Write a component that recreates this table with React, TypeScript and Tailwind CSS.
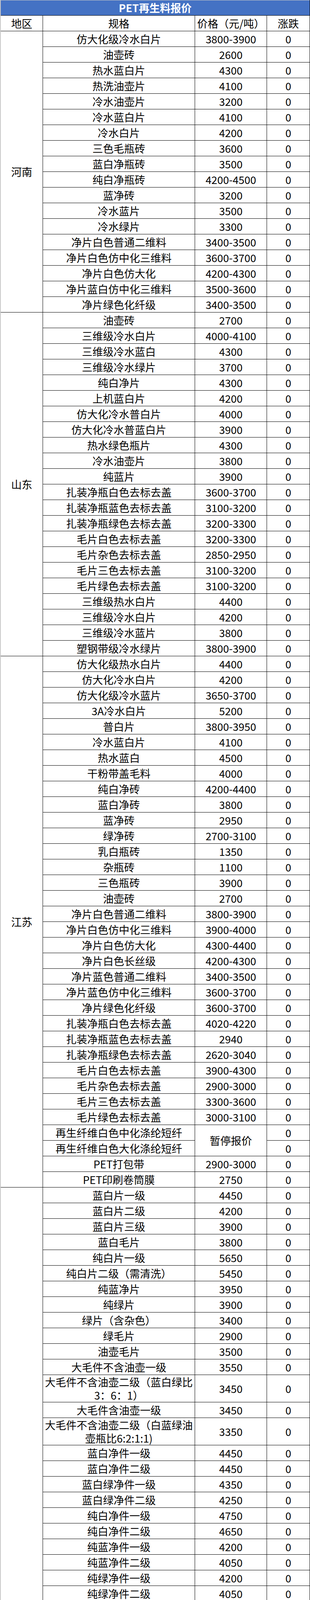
import React from "react";

type Row = { spec: string | string[]; price: string; change?: number };
type Group = { merged: string; rows: { spec: string; change?: number }[] };
type Block = Row | Group;

const r = (spec: string | string[], price: string, change = 0): Row => ({ spec, price, change });

const regions: { name: string; blocks: Block[] }[] = [
  {
    name: "河南",
    blocks: [
      r("仿大化级冷水白片", "3800-3900"),
      r("油壶砖", "2600"),
      r("热水蓝白片", "4300"),
      r("热洗油壶片", "4100"),
      r("冷水油壶片", "3200"),
      r("冷水蓝白片", "4100"),
      r("冷水白片", "4200"),
      r("三色毛瓶砖", "3600"),
      r("蓝白净瓶砖", "3500"),
      r("纯白净瓶砖", "4200-4500"),
      r("蓝净砖", "3200"),
      r("冷水蓝片", "3500"),
      r("冷水绿片", "3300"),
      r("净片白色普通二维料", "3400-3500"),
      r("净片白色仿中化三维料", "3600-3700"),
      r("净片白色仿大化", "4200-4300"),
      r("净片蓝白仿中化三维料", "3500-3600"),
      r("净片绿色化纤级", "3400-3500"),
    ],
  },
  {
    name: "山东",
    blocks: [
      r("油壶砖", "2700"),
      r("三维级冷水白片", "4000-4100"),
      r("三维级冷水蓝白", "4300"),
      r("三维级冷水绿片", "3700"),
      r("纯白净片", "4300"),
      r("上机蓝白片", "4200"),
      r("仿大化冷水普白片", "4000"),
      r("仿大化冷水普蓝白片", "3900"),
      r("热水绿色瓶片", "4300"),
      r("冷水油壶片", "3800"),
      r("纯蓝片", "3900"),
      r("扎装净瓶白色去标去盖", "3600-3700"),
      r("扎装净瓶蓝色去标去盖", "3100-3200"),
      r("扎装净瓶绿色去标去盖", "3200-3300"),
      r("毛片白色去标去盖", "3200-3300"),
      r("毛片杂色去标去盖", "2850-2950"),
      r("毛片三色去标去盖", "3100-3200"),
      r("毛片绿色去标去盖", "3100-3200"),
      r("三维级热水白片", "4400"),
      r("三维级冷水白片", "4200"),
      r("三维级冷水蓝片", "3800"),
      r("塑钢带级冷水绿片", "3800-3900"),
    ],
  },
  {
    name: "江苏",
    blocks: [
      r("仿大化级热水白片", "4400"),
      r("仿大化冷水白片", "4200"),
      r("仿大化级冷水蓝片", "3650-3700"),
      r("3A冷水白片", "5200"),
      r("普白片", "3800-3950"),
      r("冷水蓝白片", "4100"),
      r("热水蓝白", "4500"),
      r("干粉带盖毛料", "4000"),
      r("纯白净砖", "4200-4400"),
      r("蓝白净砖", "3800"),
      r("蓝净砖", "2950"),
      r("绿净砖", "2700-3100"),
      r("乳白瓶砖", "1350"),
      r("杂瓶砖", "1100"),
      r("三色瓶砖", "3900"),
      r("油壶砖", "2700"),
      r("净片白色普通二维料", "3800-3900"),
      r("净片白色仿中化三维料", "3900-4000"),
      r("净片白色仿大化", "4300-4400"),
      r("净片白色长丝级", "4200-4300"),
      r("净片蓝色普通二维料", "3400-3500"),
      r("净片蓝色仿中化三维料", "3600-3700"),
      r("净片绿色化纤级", "3600-3700"),
      r("扎装净瓶白色去标去盖", "4020-4220"),
      r("扎装净瓶蓝色去标去盖", "2940"),
      r("扎装净瓶绿色去标去盖", "2620-3040"),
      r("毛片白色去标去盖", "3900-4300"),
      r("毛片杂色去标去盖", "2900-3000"),
      r("毛片三色去标去盖", "3300-3600"),
      r("毛片绿色去标去盖", "3000-3100"),
      {
        merged: "暂停报价",
        rows: [{ spec: "再生纤维白色中化涤纶短纤" }, { spec: "再生纤维白色大化涤纶短纤" }],
      },
      r("PET打包带", "2900-3000"),
      r("PET印刷卷筒膜", "2750"),
    ],
  },
  {
    name: "浙江",
    blocks: [
      r("蓝白片一级", "4450"),
      r("蓝白片二级", "4200"),
      r("蓝白片三级", "3900"),
      r("蓝白毛片", "3800"),
      r("纯白片一级", "5650"),
      r("纯白片二级（需清洗）", "5450"),
      r("纯蓝净片", "3950"),
      r("纯绿片", "3900"),
      r("绿片（含杂色）", "3400"),
      r("绿毛片", "2900"),
      r("油壶毛片", "3500"),
      r("大毛件不含油壶一级", "3550"),
      r(["大毛件不含油壶二级（蓝白绿比", "3：6：1）"], "3450"),
      r("大毛件含油壶一级", "3450"),
      r(["大毛件不含油壶二级（白蓝绿油", "壶瓶比6:2:1:1)"], "3350"),
      r("蓝白净件一级", "4450"),
      r("蓝白净件二级", "4450"),
      r("蓝白绿净件一级", "4350"),
      r("蓝白绿净件二级", "4250"),
      r("纯白净件一级", "4750"),
      r("纯白净件二级", "4650"),
      r("纯蓝净件一级", "4200"),
      r("纯蓝净件二级", "4050"),
      r("纯绿净件一级", "4200"),
      r("纯绿净件二级", "4050"),
      r("绿净件一级（含杂色）", "3900"),
      r("绿净件二级（含杂色）", "3750"),
      r("油壶净件", "3000"),
      r("油壶毛件", "2850"),
      r("毛瓶", "4000"),
      r("净片白色普通二维料", "3800-3900"),
      r("净片白色仿中化三维料", "3900-4000"),
      r("净片白色仿大化", "4100-4200"),
      r("净片白色长丝级", "4300-4400"),
      r("净片蓝色普通二维料", "3400-3500"),
      r("净片蓝色仿中化三维料", "3600-3700"),
      r("净片绿色化纤级", "3600-3700"),
      r("扎装净瓶白色去标去盖", "3500-3600"),
      r("扎装净瓶蓝色去标去盖", "3300-3400", 100),
      r("扎装净瓶绿色去标去盖", "3000", 200),
      r("毛片白色去标去盖", "3300-3400", 100),
      r("毛片杂色去标去盖", "2900-3000", 100),
      r("毛片三色去标去盖", "3200-3300", 100),
      r("毛片绿色去标去盖", "3000-3100", 100),
      r("二维上机蓝白片", "4500"),
      r("冷水蓝白片", "4000"),
      r("蓝白毛片（带盖）", "3600"),
      r("绿瓶砖", "3000"),
      r("冷水绿片", "3400"),
      r("优质白瓶", "4400"),
      r(["普通白瓶（外表灰暗但水洗后能", "恢复光亮）"], "3600"),
      r(["等外白瓶（含黏胶标签，外表灰", "暗但水洗后不能恢复光亮）"], "2800"),
      r("蓝瓶", "2400"),
      r(["散货优质绿瓶（单独打包，优质", "比例85%以上，加400元/吨）"], "2300"),
      r("普通绿瓶", "2100"),
      r(["小油瓶（油瓶比例不超过", "10%）"], "2500"),
      r(["散货杂色瓶（单独打包，加300", "元/吨）"], "100"),
      r(["散货杂塑瓶（单独打包，加300", "元/吨）"], "100"),
      r(["散货瓶盖（单独装袋，加200元/", "吨）"], "2600"),
      r(["冷水片3A白瓶片（分六级，按", "等级结算）"], "4400-4900"),
      r(["冷水白蓝片（分六级，按等级结", "算）"], "4100-4500"),
      r("单独打包油砖", "2500"),
      r("单独打包瓶胚粉碎料（白）", "6600"),
      r("单独打包瓶胚粉碎料（灰）", "6300"),
      r("塑钢带级冷水绿片", "3500"),
      r("三维级热水蓝白片", "4400"),
      r("长丝级冷水蓝白片", "4100"),
    ],
  },
  {
    name: "福建",
    blocks: [
      r("三维级热水蓝白片", "4100-4200"),
      {
        merged: "暂停报价",
        rows: [
          { spec: "净片白色仿中化三维料" },
          { spec: "净片白色仿大化" },
          { spec: "净片白色长丝级" },
        ],
      },
      r("热水蓝白片", "4300"),
      r("带盖毛料", "3800"),
      r("冷水蓝白", "3800-3900"),
    ],
  },
];

function Change({ value = 0 }: { value?: number }) {
  return <span className={value ? "font-bold text-[#ff0000]" : ""}>{value}</span>;
}

function PriceRow({ row }: { row: Row }) {
  const lines = Array.isArray(row.spec) ? row.spec : [row.spec];
  const tall = lines.length > 1;
  return (
    <div className={`flex border-b border-black ${tall ? "h-[70px]" : "h-[40px]"}`}>
      <div className="flex w-[389px] shrink-0 flex-col items-center justify-center border-r border-black">
        {lines.map((line, i) => (
          <div key={i} className="whitespace-nowrap">
            {line}
          </div>
        ))}
      </div>
      <div className="flex w-[184px] shrink-0 items-center justify-center border-r border-black">
        {row.price}
      </div>
      <div className="flex flex-1 items-center justify-center">
        <Change value={row.change} />
      </div>
    </div>
  );
}

// price cell spans several rows; spec and change columns keep their own lines
function MergedGroup({ group }: { group: Group }) {
  const last = group.rows.length - 1;
  return (
    <div className="flex border-b border-black">
      <div className="flex w-[389px] shrink-0 flex-col border-r border-black">
        {group.rows.map((row, i) => (
          <div
            key={i}
            className={`flex items-center justify-center whitespace-nowrap ${
              i < last ? "h-[40px] border-b border-black" : "h-[39px]"
            }`}
          >
            {row.spec}
          </div>
        ))}
      </div>
      <div className="flex w-[184px] shrink-0 items-center justify-center border-r border-black">
        {group.merged}
      </div>
      <div className="flex flex-1 flex-col">
        {group.rows.map((row, i) => (
          <div
            key={i}
            className={`flex items-center justify-center ${
              i < last ? "h-[40px] border-b border-black" : "h-[39px]"
            }`}
          >
            <Change value={row.change} />
          </div>
        ))}
      </div>
    </div>
  );
}

export default function App() {
  return (
    <div className="w-[793px] bg-white font-['Noto_Sans_CJK_SC','Noto_Sans',sans-serif] text-[27px] leading-[34px] text-black">
      <div className="border-l-2 border-r border-l-[#c8c8c8] border-r-black">
        <div className="flex h-[40px] items-center justify-center border-t border-b border-t-[#c8c8c8] border-b-black bg-[#4472c4] font-bold text-white">
          PET再生料报价
        </div>
        <div className="flex h-[40px] border-b border-black">
          <div className="flex w-[108px] shrink-0 items-center justify-center border-r border-black">地区</div>
          <div className="flex w-[389px] shrink-0 items-center justify-center border-r border-black">规格</div>
          <div className="flex w-[184px] shrink-0 items-center justify-center border-r border-black">价格（元/吨）</div>
          <div className="flex flex-1 items-center justify-center">涨跌</div>
        </div>
        {regions.map((region) => (
          <div key={region.name} className="flex">
            <div className="flex w-[108px] shrink-0 items-center justify-center border-r border-b border-black">
              {region.name}
            </div>
            <div className="flex flex-1 flex-col">
              {region.blocks.map((block, i) =>
                "merged" in block ? (
                  <MergedGroup key={i} group={block} />
                ) : (
                  <PriceRow key={i} row={block} />
                )
              )}
            </div>
          </div>
        ))}
      </div>
    </div>
  );
}
